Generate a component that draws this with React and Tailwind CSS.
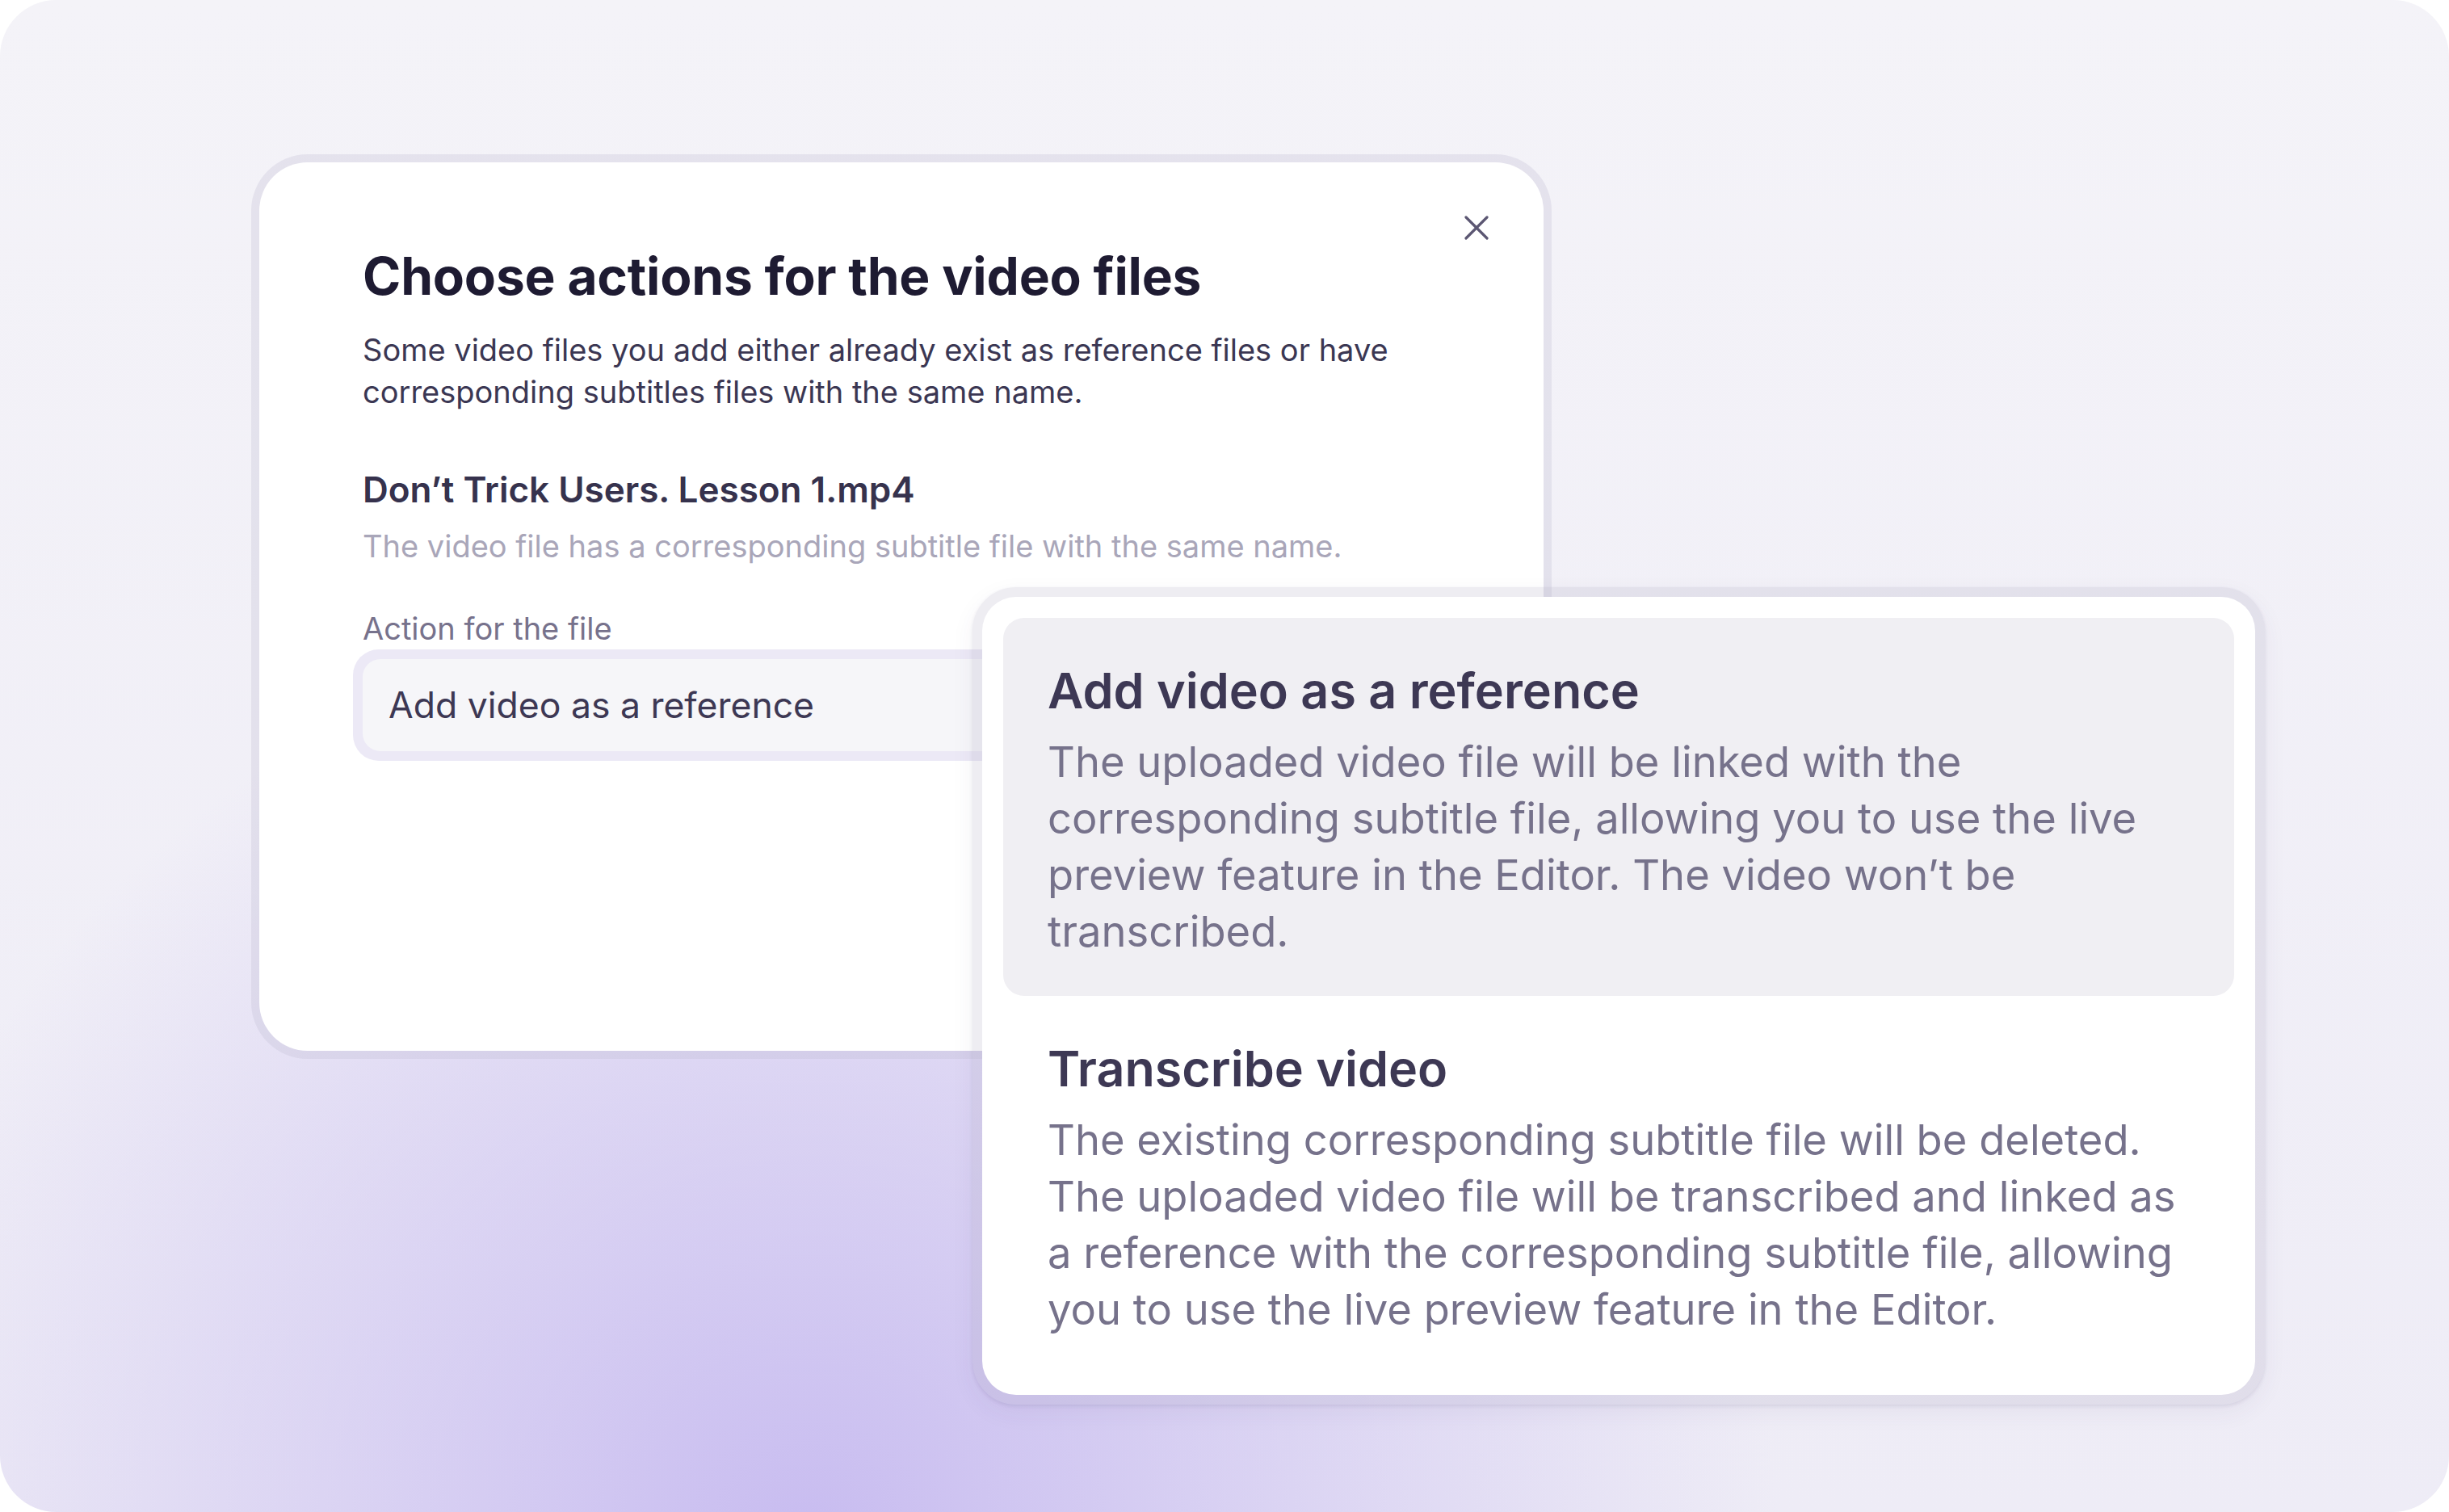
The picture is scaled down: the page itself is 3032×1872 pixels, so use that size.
const options = [
  {
    title: 'Add video as a reference',
    lines: [
      'The uploaded video file will be linked with the',
      'corresponding subtitle file, allowing you to use the live',
      'preview feature in the Editor. The video won’t be',
      'transcribed.',
    ],
    active: true,
  },
  {
    title: 'Transcribe video',
    lines: [
      'The existing corresponding subtitle file will be deleted.',
      'The uploaded video file will be transcribed and linked as',
      'a reference with the corresponding subtitle file, allowing',
      'you to use the live preview feature in the Editor.',
    ],
    active: false,
  },
];

function CloseIcon() {
  return (
    <svg width="30" height="30" viewBox="0 0 30 30" fill="none">
      <path d="M2 2L28 28M28 2L2 28" stroke="#5b5672" strokeWidth="3.2" strokeLinecap="round" />
    </svg>
  );
}

export default function App() {
  return (
    <div className="w-[3032px] h-[1872px] bg-white font-['Inter',sans-serif]">
      <div className="relative w-full h-full rounded-[70px] overflow-hidden bg-[radial-gradient(ellipse_1200px_1150px_at_1000px_1900px,#c8bcf0_0%,rgba(200,188,240,0.6)_40%,rgba(200,188,240,0)_100%),linear-gradient(180deg,#f4f3f8_0%,#eeecf6_100%)] pl-[311px] pt-[191px]">
        {/* Dialog */}
        <div className="w-[1610px] h-[1120px] rounded-[70px] p-[10px] bg-[rgba(190,188,210,0.28)]">
          <div className="relative h-full rounded-[60px] bg-white px-[128px] pt-[102px]">
            <button className="absolute top-[66px] right-[68px] flex items-center justify-center">
              <CloseIcon />
            </button>
            <h1 className="text-[64px] leading-[77px] font-bold text-[#1e1b32] tracking-[-0.2px]">
              Choose actions for the video files
            </h1>
            <p className="mt-[27px] text-[38px] leading-[52px] text-[#3b3753]">
              Some video files you add either already exist as reference files or have corresponding subtitles files with the same name.
            </p>
            <h2 className="mt-[68px] text-[44px] leading-[55px] font-semibold text-[#36324d]">
              Don’t Trick Users. Lesson 1.mp4
            </h2>
            <p className="mt-[16px] text-[38px] leading-[52px] text-[#a9a6b9]">
              The video file has a corresponding subtitle file with the same name.
            </p>
            <div className="mt-[50px] text-[38px] leading-[52px] text-[#77728c]">Action for the file</div>
            <div className="-mx-[12px] rounded-[32px] bg-[#ece9f6] p-[12px]">
              <div className="h-[114px] rounded-[22px] bg-[#f6f6f9] flex items-center pl-[32px] text-[44.5px] text-[#3d3854]">
                Add video as a reference
              </div>
            </div>
          </div>
        </div>

        {/* Dropdown menu */}
        <div className="absolute left-[1204px] top-[727px] w-[1600px] rounded-[54px] p-[12px] bg-[rgba(170,166,192,0.2)] shadow-[0_2px_4px_rgba(60,50,100,0.10),0_10px_30px_rgba(60,50,100,0.06)]">
          <div className="rounded-[42px] bg-white p-[26px] flex flex-col">
            {options.map((opt) => (
              <div
                key={opt.title}
                className={`rounded-[26px] pl-[55px] pr-[40px] pt-[53px] pb-[45px] ${opt.active ? 'bg-[#f0eff3]' : ''}`}
              >
                <div className="text-[61px] leading-[74px] font-semibold text-[#3d3854]">{opt.title}</div>
                <p className="mt-[16px] text-[52.5px] leading-[70px] text-[#76728b] whitespace-nowrap">
                  {opt.lines.map((l, i) => (
                    <span key={i}>
                      {l}
                      {i < opt.lines.length - 1 && <br />}
                    </span>
                  ))}
                </p>
              </div>
            ))}
          </div>
        </div>
      </div>
    </div>
  );
}
